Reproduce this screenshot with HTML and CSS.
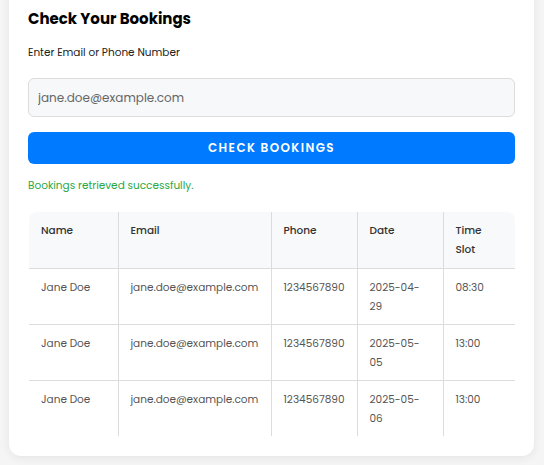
FILE: index.html
```html
<!DOCTYPE html>
<html lang="en">
<head>
<meta charset="utf-8">
<title>Check Your Bookings</title>
<link rel="stylesheet" href="styles.css">
</head>
<body>
<div class="page">
  <section class="card">
    <h2 class="title">Check Your Bookings</h2>
    <label class="label" for="q">Enter Email or Phone Number</label>
    <input class="input" id="q" type="text" placeholder="jane.doe@example.com">
    <button class="btn" type="button">Check Bookings</button>
    <p class="success">Bookings retrieved successfully.</p>
    <table class="table">
      <colgroup>
        <col class="c-name"><col class="c-email"><col class="c-phone"><col class="c-date"><col class="c-time">
      </colgroup>
      <thead>
        <tr><th>Name</th><th>Email</th><th>Phone</th><th>Date</th><th>Time Slot</th></tr>
      </thead>
      <tbody>
        <tr><td>Jane Doe</td><td>jane.doe@example.com</td><td>1234567890</td><td>2025-04-29</td><td>08:30</td></tr>
        <tr><td>Jane Doe</td><td>jane.doe@example.com</td><td>1234567890</td><td>2025-05-05</td><td>13:00</td></tr>
        <tr><td>Jane Doe</td><td>jane.doe@example.com</td><td>1234567890</td><td>2025-05-06</td><td>13:00</td></tr>
      </tbody>
    </table>
  </section>
</div>
</body>
</html>
```
FILE: styles.css
```css
* { box-sizing: border-box; }
html, body { margin: 0; padding: 0; }
body {
  background: #f5f5f5;
  font-family: "Poppins", "Open Sans", sans-serif;
  color: #333;
  overflow: hidden;
}
.page {
  padding: 0 10px 9px 9px;
}
.card {
  margin-top: -20px;
  background: #fff;
  border-radius: 12px;
  box-shadow: 0 2px 10px rgba(0,0,0,0.07);
  padding: 28px 19px 20px 19px;
  display: flex;
  flex-direction: column;
}
.title {
  margin: 0;
  font-size: 15px;
  font-weight: 700;
  color: #000;
  line-height: 22px;
}
.label {
  margin-top: 15px;
  font-size: 10.5px;
  line-height: 16px;
  color: #222;
}
.input {
  margin-top: 17px;
  height: 39px;
  width: 100%;
  border: 1px solid #dcdcdc;
  border-radius: 6px;
  background: #f7f8fa;
  padding: 0 9px;
  font-family: inherit;
  font-size: 12px;
  color: #333;
}
.input::placeholder { color: #666; }
.btn {
  margin-top: 15px;
  height: 32px;
  width: 100%;
  border: none;
  border-radius: 6px;
  background: #007bff;
  color: #fff;
  font-family: inherit;
  font-size: 12px;
  font-weight: 600;
  letter-spacing: 1.4px;
  text-transform: uppercase;
}
.success {
  margin: 14px 0 0 0;
  font-size: 10.5px;
  line-height: 16px;
  color: #28a745;
}
.table {
  margin-top: 18px;
  width: 486px;
  margin-left: 1px;
  border-collapse: collapse;
  table-layout: fixed;
  font-size: 10.5px;
}
.c-name { width: 89px; }
.c-email { width: 153px; }
.c-phone { width: 86px; }
.c-date { width: 86px; }
.c-time { width: 72px; }
.table th, .table td {
  text-align: left;
  vertical-align: top;
  padding: 9px 12px 8px 12px;
  line-height: 19px;
  height: 56px;
  border: 1px solid #dcdcdc;
}
.table th {
  background: #f8f9fa;
  font-weight: 500;
  color: #333;
  border-top: none;
}
.table td { color: #555; }
.table tr > :first-child { border-left: none; }
.table tr > :last-child { border-right: none; }
.table tbody tr:last-child td { border-bottom: none; }
.table thead th:first-child { border-top-left-radius: 8px; }
.table thead th:last-child { border-top-right-radius: 8px; }
```
